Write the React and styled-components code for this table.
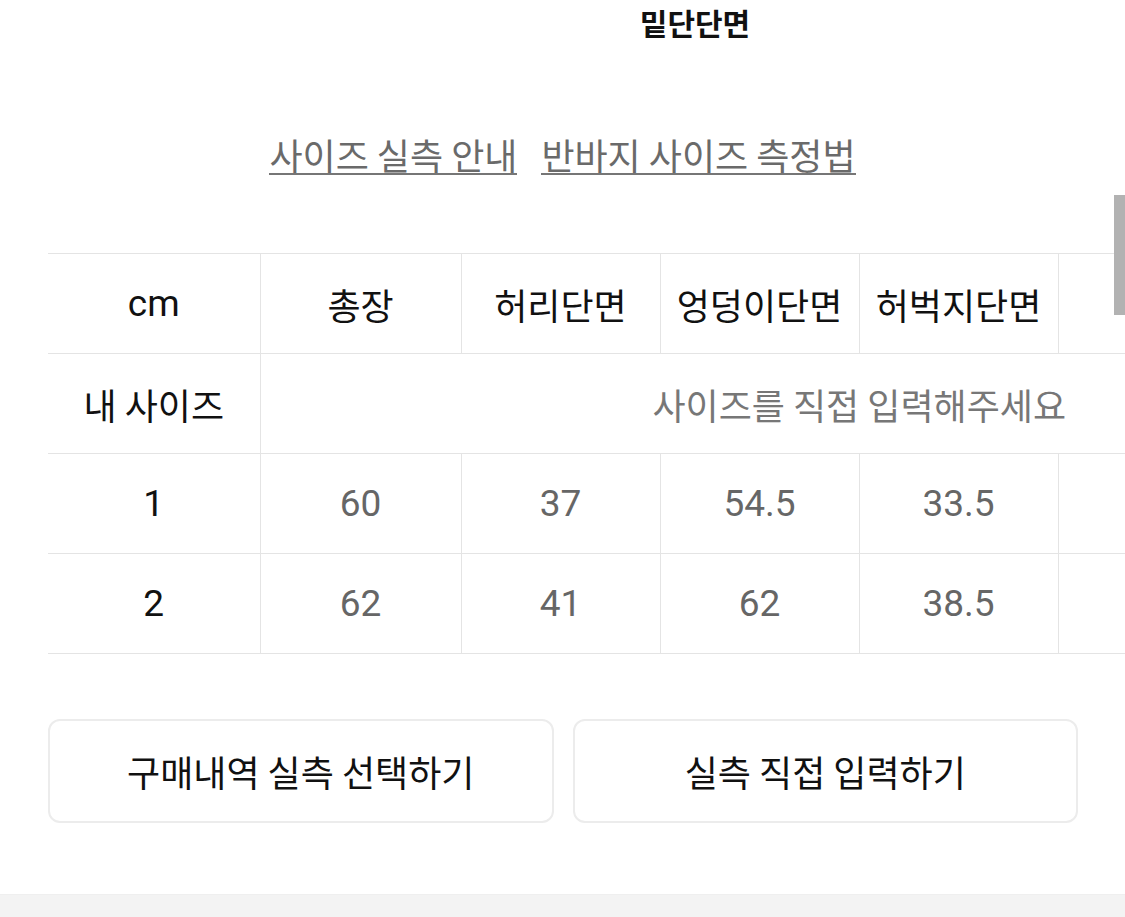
import React from "react";
import styled, { createGlobalStyle } from "styled-components";

const GlobalStyle = createGlobalStyle`
  html, body {
    margin: 0;
    padding: 0;
    background: #ffffff;
  }
  body {
    font-family: "Noto Sans CJK KR", "Noto Sans", sans-serif;
    color: #111;
    overflow: hidden;
  }
`;

const Page = styled.div`
  position: relative;
  width: 1125px;
  min-height: 917px;
  display: flex;
  flex-direction: column;
`;

const Title = styled.div`
  height: 44px;
  line-height: 44px;
  padding-left: 265px;
  text-align: center;
  font-size: 30px;
  font-weight: 700;
  color: #111;
`;

const LinkRow = styled.div`
  margin-top: 91px;
  display: flex;
  justify-content: center;
  gap: 24px;
`;

const GuideLink = styled.a`
  display: inline-block;
  font-size: 36px;
  line-height: 1.06;
  color: #6a6a6a;
  text-decoration: none;
  border-bottom: 2px solid #767676;
  cursor: pointer;
`;

const TableScroller = styled.div`
  margin-top: 78px;
  margin-left: 48px;
  overflow: hidden;
`;

const SizeTable = styled.table`
  border-collapse: collapse;
  table-layout: fixed;
  width: 1410px;
  border-top: 1px solid #e4e4e4;
`;

const Col = styled.col`
  width: ${(p) => p.$w}px;
`;

const Row = styled.tr`
  height: 100px;
`;

const Cell = styled.td`
  padding: 0;
  height: 99px;
  text-align: center;
  vertical-align: middle;
  border-bottom: 1px solid #e4e4e4;
  border-right: 1px solid #e4e4e4;
  white-space: nowrap;
  font-family: ${(p) =>
    p.$latin ? `Roboto, "Liberation Sans", sans-serif` : `"Noto Sans CJK KR", sans-serif`};
  font-size: ${(p) => (p.$latin ? "37px" : "36px")};
  color: ${(p) => (p.$muted ? "#666666" : "#111111")};
`;

const Placeholder = styled(Cell)`
  color: #777777;
  border-right: none;
`;

const ButtonRow = styled.div`
  margin-top: 65px;
  padding: 0 47px 0 48px;
  display: grid;
  grid-template-columns: 1fr 1fr;
  gap: 19px;
`;

const ActionButton = styled.button`
  box-sizing: border-box;
  height: 104px;
  background: #fff;
  border: 2px solid #ececec;
  border-radius: 12px;
  font-family: "Noto Sans CJK KR", sans-serif;
  font-size: 36px;
  color: #111;
  cursor: pointer;
`;

const Footer = styled.div`
  margin-top: 71px;
  flex: 1;
  min-height: 24px;
  background: #f3f3f3;
  border-top: 1px solid #efefef;
`;

const ScrollThumb = styled.div`
  position: absolute;
  right: 0;
  top: 195px;
  width: 11px;
  height: 120px;
  background: #b2b2b2;
`;

const headers = ["총장", "허리단면", "엉덩이단면", "허벅지단면", "", ""];
const widths = [201, 199, 199, 199, 200, 200];
const rows = [
  { label: "1", values: ["60", "37", "54.5", "33.5", "", ""] },
  { label: "2", values: ["62", "41", "62", "38.5", "", ""] },
];

export default function App() {
  return (
    <Page>
      <GlobalStyle />
      <Title>밑단단면</Title>
      <LinkRow>
        <GuideLink>사이즈 실측 안내</GuideLink>
        <GuideLink>반바지 사이즈 측정법</GuideLink>
      </LinkRow>
      <TableScroller>
        <SizeTable>
          <colgroup>
            <Col $w={212} />
            {widths.map((w, i) => (
              <Col key={i} $w={w} />
            ))}
          </colgroup>
          <tbody>
            <Row>
              <Cell $latin>cm</Cell>
              {headers.map((h, i) => (
                <Cell key={i}>{h}</Cell>
              ))}
            </Row>
            <Row>
              <Cell>내 사이즈</Cell>
              <Placeholder colSpan={headers.length}>사이즈를 직접 입력해주세요</Placeholder>
            </Row>
            {rows.map((r) => (
              <Row key={r.label}>
                <Cell $latin>{r.label}</Cell>
                {r.values.map((v, i) => (
                  <Cell key={i} $latin $muted>
                    {v}
                  </Cell>
                ))}
              </Row>
            ))}
          </tbody>
        </SizeTable>
      </TableScroller>
      <ButtonRow>
        <ActionButton>구매내역 실측 선택하기</ActionButton>
        <ActionButton>실측 직접 입력하기</ActionButton>
      </ButtonRow>
      <Footer />
      <ScrollThumb />
    </Page>
  );
}
